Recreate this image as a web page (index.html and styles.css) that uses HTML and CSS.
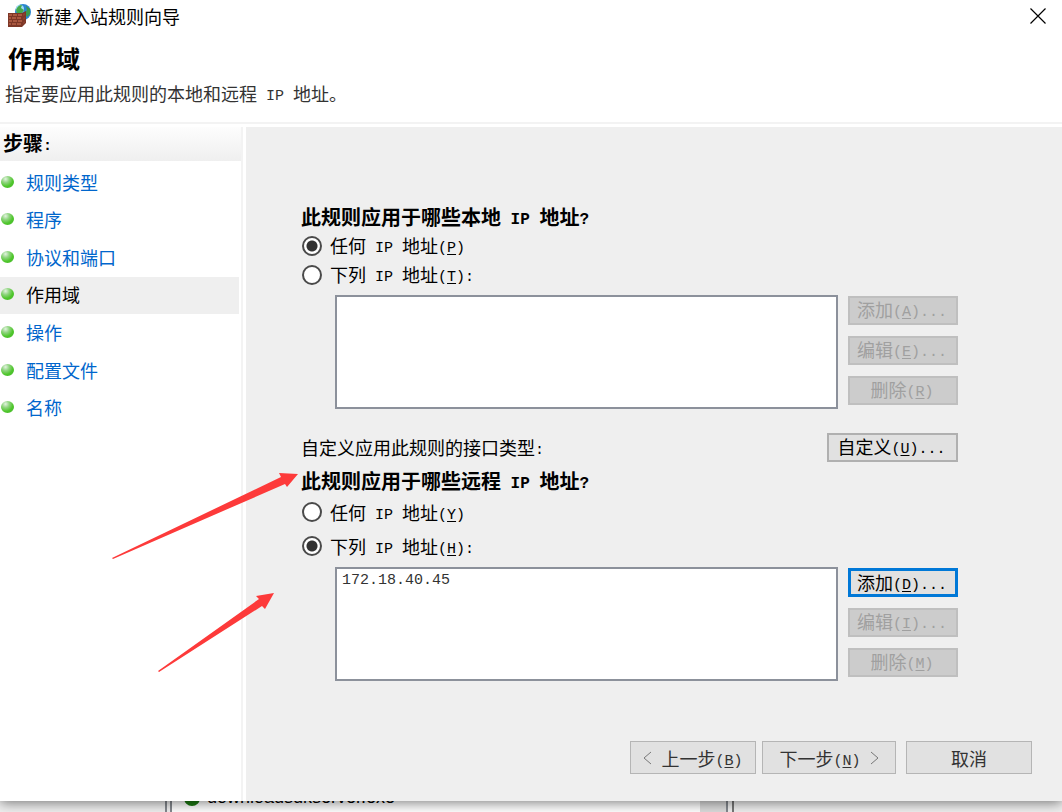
FILE: index.html
```html
<!DOCTYPE html>
<html lang="zh-CN">
<head>
  <meta charset="UTF-8">
  <meta name="viewport" content="width=device-width, initial-scale=1.0">
  <title>新建入站规则向导</title>
  <link rel="stylesheet" href="styles.css">
</head>
<body>
  <div class="dialog">
    <header class="titlebar">
      <svg class="app-icon" width="24" height="24" viewBox="0 0 24 24" aria-hidden="true">
        <circle cx="15" cy="8" r="8" fill="#2b86cf"/>
        <circle cx="12" cy="5" r="4" fill="#9fdcf5"/>
        <path d="M8 6 Q10 1 14 1 L13 4 L16 6 L14 9 L9 9 Z" fill="#45a84a"/>
        <path d="M18 2 L22 5 L22 10 L19 13 L17 9 L19 6 Z" fill="#3c9a4b"/>
        <path d="M0 9 H14 L18 7 V19 L14 23 H0 Z" fill="#7d3727"/>
        <path d="M1 10h3v2H1zM5 10h4v2H5zM10 10h4v2h-4zM1 13h2v2H1zM4 13h4v2H4zM9 13h4v2H9zM1 16h3v2H1zM5 16h4v2H5zM10 16h4v2h-4zM1 19h2v2H1zM4 19h4v2H4zM9 19h4v2H9z" fill="#a9573f"/>
        <path d="M15 10l2-1v2l-2 1zM15 14l2-1v2l-2 1zM15 18l2-1v2l-2 1z" fill="#8c412f"/>
      </svg>
      <span class="caption">新建入站规则向导</span>
      <button class="close" type="button" aria-label="关闭">
        <svg width="16" height="16" viewBox="0 0 16 16"><path d="M0.5 0.5 L15.5 15.5 M15.5 0.5 L0.5 15.5" stroke="#000" stroke-width="1.2"/></svg>
      </button>
    </header>

    <div class="intro">
      <h1>作用域</h1>
      <p>指定要应用此规则的本地和远程<span class="en"> IP </span>地址。</p>
    </div>

    <div class="content">
      <nav class="steps">
        <h2>步骤<span class="en">:</span></h2>
        <ul>
          <li><a href="#type">规则类型</a></li>
          <li><a href="#program">程序</a></li>
          <li><a href="#ports">协议和端口</a></li>
          <li class="current"><a href="#scope" aria-current="step">作用域</a></li>
          <li><a href="#action">操作</a></li>
          <li><a href="#profile">配置文件</a></li>
          <li><a href="#name">名称</a></li>
        </ul>
      </nav>

      <main>
        <form class="scope">
          <h3>此规则应用于哪些本地<span class="en"> IP </span>地址<span class="en">?</span></h3>
          <label class="choice"><input type="radio" name="local" checked><span>任何<span class="en"> IP </span>地址<span class="en">(<u>P</u>)</span></span></label>
          <label class="choice"><input type="radio" name="local"><span>下列<span class="en"> IP </span>地址<span class="en">(<u>T</u>):</span></span></label>
          <div class="addresses">
            <select size="5" aria-label="本地 IP 地址"></select>
            <div class="actions">
              <button type="button" disabled>添加<span class="en">(<u>A</u>)...</span></button>
              <button type="button" disabled>编辑<span class="en">(<u>E</u>)...</span></button>
              <button type="button" disabled>删除<span class="en">(<u>R</u>)</span></button>
            </div>
          </div>

          <div class="interfaces">
            <span>自定义应用此规则的接口类型<span class="en">:</span></span>
            <button type="button">自定义<span class="en">(<u>U</u>)...</span></button>
          </div>

          <h3>此规则应用于哪些远程<span class="en"> IP </span>地址<span class="en">?</span></h3>
          <label class="choice remote"><input type="radio" name="remote"><span>任何<span class="en"> IP </span>地址<span class="en">(<u>Y</u>)</span></span></label>
          <label class="choice remote"><input type="radio" name="remote" checked><span>下列<span class="en"> IP </span>地址<span class="en">(<u>H</u>):</span></span></label>
          <div class="addresses remote-list">
            <select size="5" aria-label="远程 IP 地址">
              <option>172.18.40.45</option>
            </select>
            <div class="actions">
              <button class="default" type="button">添加<span class="en">(<u>D</u>)...</span></button>
              <button type="button" disabled>编辑<span class="en">(<u>I</u>)...</span></button>
              <button type="button" disabled>删除<span class="en">(<u>M</u>)</span></button>
            </div>
          </div>
        </form>

        <footer>
          <button class="back" type="button"><svg width="9" height="14" viewBox="0 0 9 14"><path d="M8 1 L1 7 L8 13"/></svg><span>上一步<span class="en">(<u>B</u>)</span></span></button>
          <button class="next" type="button"><span>下一步<span class="en">(<u>N</u>)</span></span><svg width="9" height="14" viewBox="0 0 9 14"><path d="M1 1 L8 7 L1 13"/></svg></button>
          <button class="cancel" type="button">取消</button>
        </footer>
      </main>
    </div>

    <svg class="arrows" width="190" height="210" viewBox="112 468 190 210" aria-hidden="true">
      <path d="M112 558 L281 477 L279 473 L298 474 L287 487 L285 484 L113 559 Z"/>
      <path d="M158 671 L259 599 L256 596 L274 593 L265 609 L262 606 L159 672 Z"/>
    </svg>
  </div>

  <div class="behind">
    <div class="tree"></div>
    <div class="files">
      <svg width="18" height="18" viewBox="0 0 18 18" aria-hidden="true"><circle cx="9" cy="9" r="8" fill="#1c7a12"/><path d="M6 8 Q9 12 12 8" stroke="#dff0dc" stroke-width="2" fill="none"/></svg>
      <span>downloadsdkserver.exe</span>
    </div>
    <div class="scrollbar"></div>
    <div class="side"></div>
  </div>
</body>
</html>
```
FILE: styles.css
```css
* {
  box-sizing: border-box;
}

body {
  margin: 0;
  height: 100vh;
  display: flex;
  flex-direction: column;
  overflow: hidden;
  font-family: "Noto Sans CJK SC", sans-serif;
  font-size: 18px;
  line-height: 24px;
  color: #000;
  background: #f0f0f0;
}

h1, h2, h3, p, ul {
  margin: 0;
  padding: 0;
}

button, select {
  font: inherit;
  color: inherit;
}

/* half-width characters, two to one Chinese character */
.en {
  font-family: "Liberation Mono", monospace;
  font-size: 15px;
  line-height: 1;
  vertical-align: 1px;
  white-space: pre;
}

u {
  text-underline-offset: 2px;
}

.dialog {
  position: relative;
  z-index: 1;
  flex: 1;
  display: flex;
  flex-direction: column;
  background: #fff;
  box-shadow: 0 2px 12px rgba(0, 0, 0, 0.5);
}

.titlebar {
  display: flex;
  align-items: center;
  height: 32px;
  padding: 0 16px 0 8px;
}

.app-icon {
  margin-right: 4px;
}

.close {
  display: flex;
  margin-left: auto;
  padding: 0;
  border: none;
  background: none;
}

.intro {
  height: 92px;
  padding: 10px 5px 0;
  border-bottom: 2px solid #f3f3f3;
}

.intro h1 {
  padding-left: 3px;
  font-size: 24px;
  line-height: 32px;
}

.intro p {
  margin-top: 7px;
  color: #333;
}

.content {
  flex: 1;
  display: flex;
  padding-top: 3px;
}

.steps {
  width: 243px;
  margin-right: 3px;
  border-right: 2px solid #f3f3f3;
}

.steps h2 {
  height: 34px;
  padding-left: 3px;
  font-size: 20px;
  line-height: 32px;
  background: linear-gradient(#fdfdfd, #efefef);
}

.steps ul {
  display: grid;
  grid-template-rows: repeat(7, 1fr);
  height: 263px;
  margin: 3px 2px 0 0;
  list-style: none;
}

.steps li {
  display: flex;
  align-items: center;
  padding-bottom: 2px;
}

.steps li::before {
  content: "";
  width: 13px;
  height: 12px;
  margin: 0 12px 0 1px;
  border-radius: 50%;
  background: radial-gradient(circle at 35% 25%, #e3f3e0 0, #8fd47f 30%, #4fc62c 60%, #43b52a 100%);
}

.steps a {
  color: #0066cc;
  text-decoration: none;
}

.steps .current {
  background: #efefef;
}

.steps .current a {
  color: #000;
}

main {
  flex: 1;
  display: flex;
  flex-direction: column;
  background: #efefef;
}

.scope {
  padding: 78px 104px 0 55px;
}

.scope h3 {
  height: 26px;
  font-size: 20px;
  line-height: 24px;
}

.scope h3 .en {
  font-size: 16px;
}

.choice {
  display: flex;
  align-items: center;
  height: 29px;
}

.choice.remote {
  height: 34px;
}

.choice input {
  appearance: none;
  width: 20px;
  height: 20px;
  margin: 0 8px 0 1px;
  border: 2px solid #4a4a4a;
  border-radius: 50%;
  background: #fff;
}

.choice span {
  margin-bottom: 1px;
}

.choice input:checked {
  background: radial-gradient(circle, #333 5px, #fff 6px);
}

.addresses {
  display: flex;
  gap: 10px;
  margin: 6px 0 0 34px;
}

.remote-list {
  margin-top: 4px;
}

.addresses select {
  flex: 1;
  height: 114px;
  padding: 0;
  border: 2px solid #8c919b;
  border-radius: 0;
  background: #fff;
  outline: none;
}

.addresses option {
  padding: 3px 5px;
  font-family: "Liberation Mono", monospace;
  font-size: 15px;
  color: #333;
}

.actions {
  display: flex;
  flex-direction: column;
  gap: 11px;
  width: 110px;
  padding-top: 1px;
}

.scope button {
  height: 29px;
  padding: 0 2px 2px 0;
  border: 2px solid #b0b0b0;
  background: #e1e1e1;
  line-height: 23px;
}

.scope button:disabled {
  border-color: #bfbfbf;
  background: #ccc;
  color: #a0a0a0;
}

.scope button.default {
  border: 3px solid #0078d7;
}

.interfaces {
  display: flex;
  align-items: center;
  justify-content: space-between;
  margin: 24px 0 7px;
}

.interfaces span {
  margin-bottom: 2px;
}

.interfaces button {
  width: 131px;
}

footer {
  display: flex;
  justify-content: flex-end;
  margin-top: auto;
  padding: 0 30px 27px 0;
}

footer button {
  display: flex;
  align-items: center;
  justify-content: center;
  gap: 9px;
  width: 126px;
  height: 33px;
  padding: 0;
  border: 1px solid #b5b5b5;
  background: #e1e1e1;
  color: #333;
}

footer .next {
  width: 134px;
  margin: 0 10px 0 6px;
}

footer path {
  fill: none;
  stroke: #777;
}

.arrows {
  position: absolute;
  left: 112px;
  top: 468px;
  fill: #fd3a3a;
  pointer-events: none;
}

/* the window that shows below the dialog */
.behind {
  display: flex;
  height: 11px;
  font-family: "Liberation Sans", sans-serif;
}

.tree {
  width: 172px;
  border-right: 2px solid #85898f;
}

.tree::after {
  content: "";
  display: block;
  height: 11px;
  margin-right: 3px;
  border-right: 2px solid #85898f;
}

.files {
  flex: 1;
  display: flex;
  align-items: flex-end;
  gap: 6px;
  padding: 0 0 5px 11px;
  overflow: hidden;
  background: #fff;
}

.files span {
  font-size: 18px;
  line-height: 20px;
}

.scrollbar {
  width: 28px;
  background: #dcdcdc;
  border-right: 2px solid #85898f;
}

.side {
  width: 330px;
  border-left: 2px solid #777;
  margin-left: 4px;
}
```
